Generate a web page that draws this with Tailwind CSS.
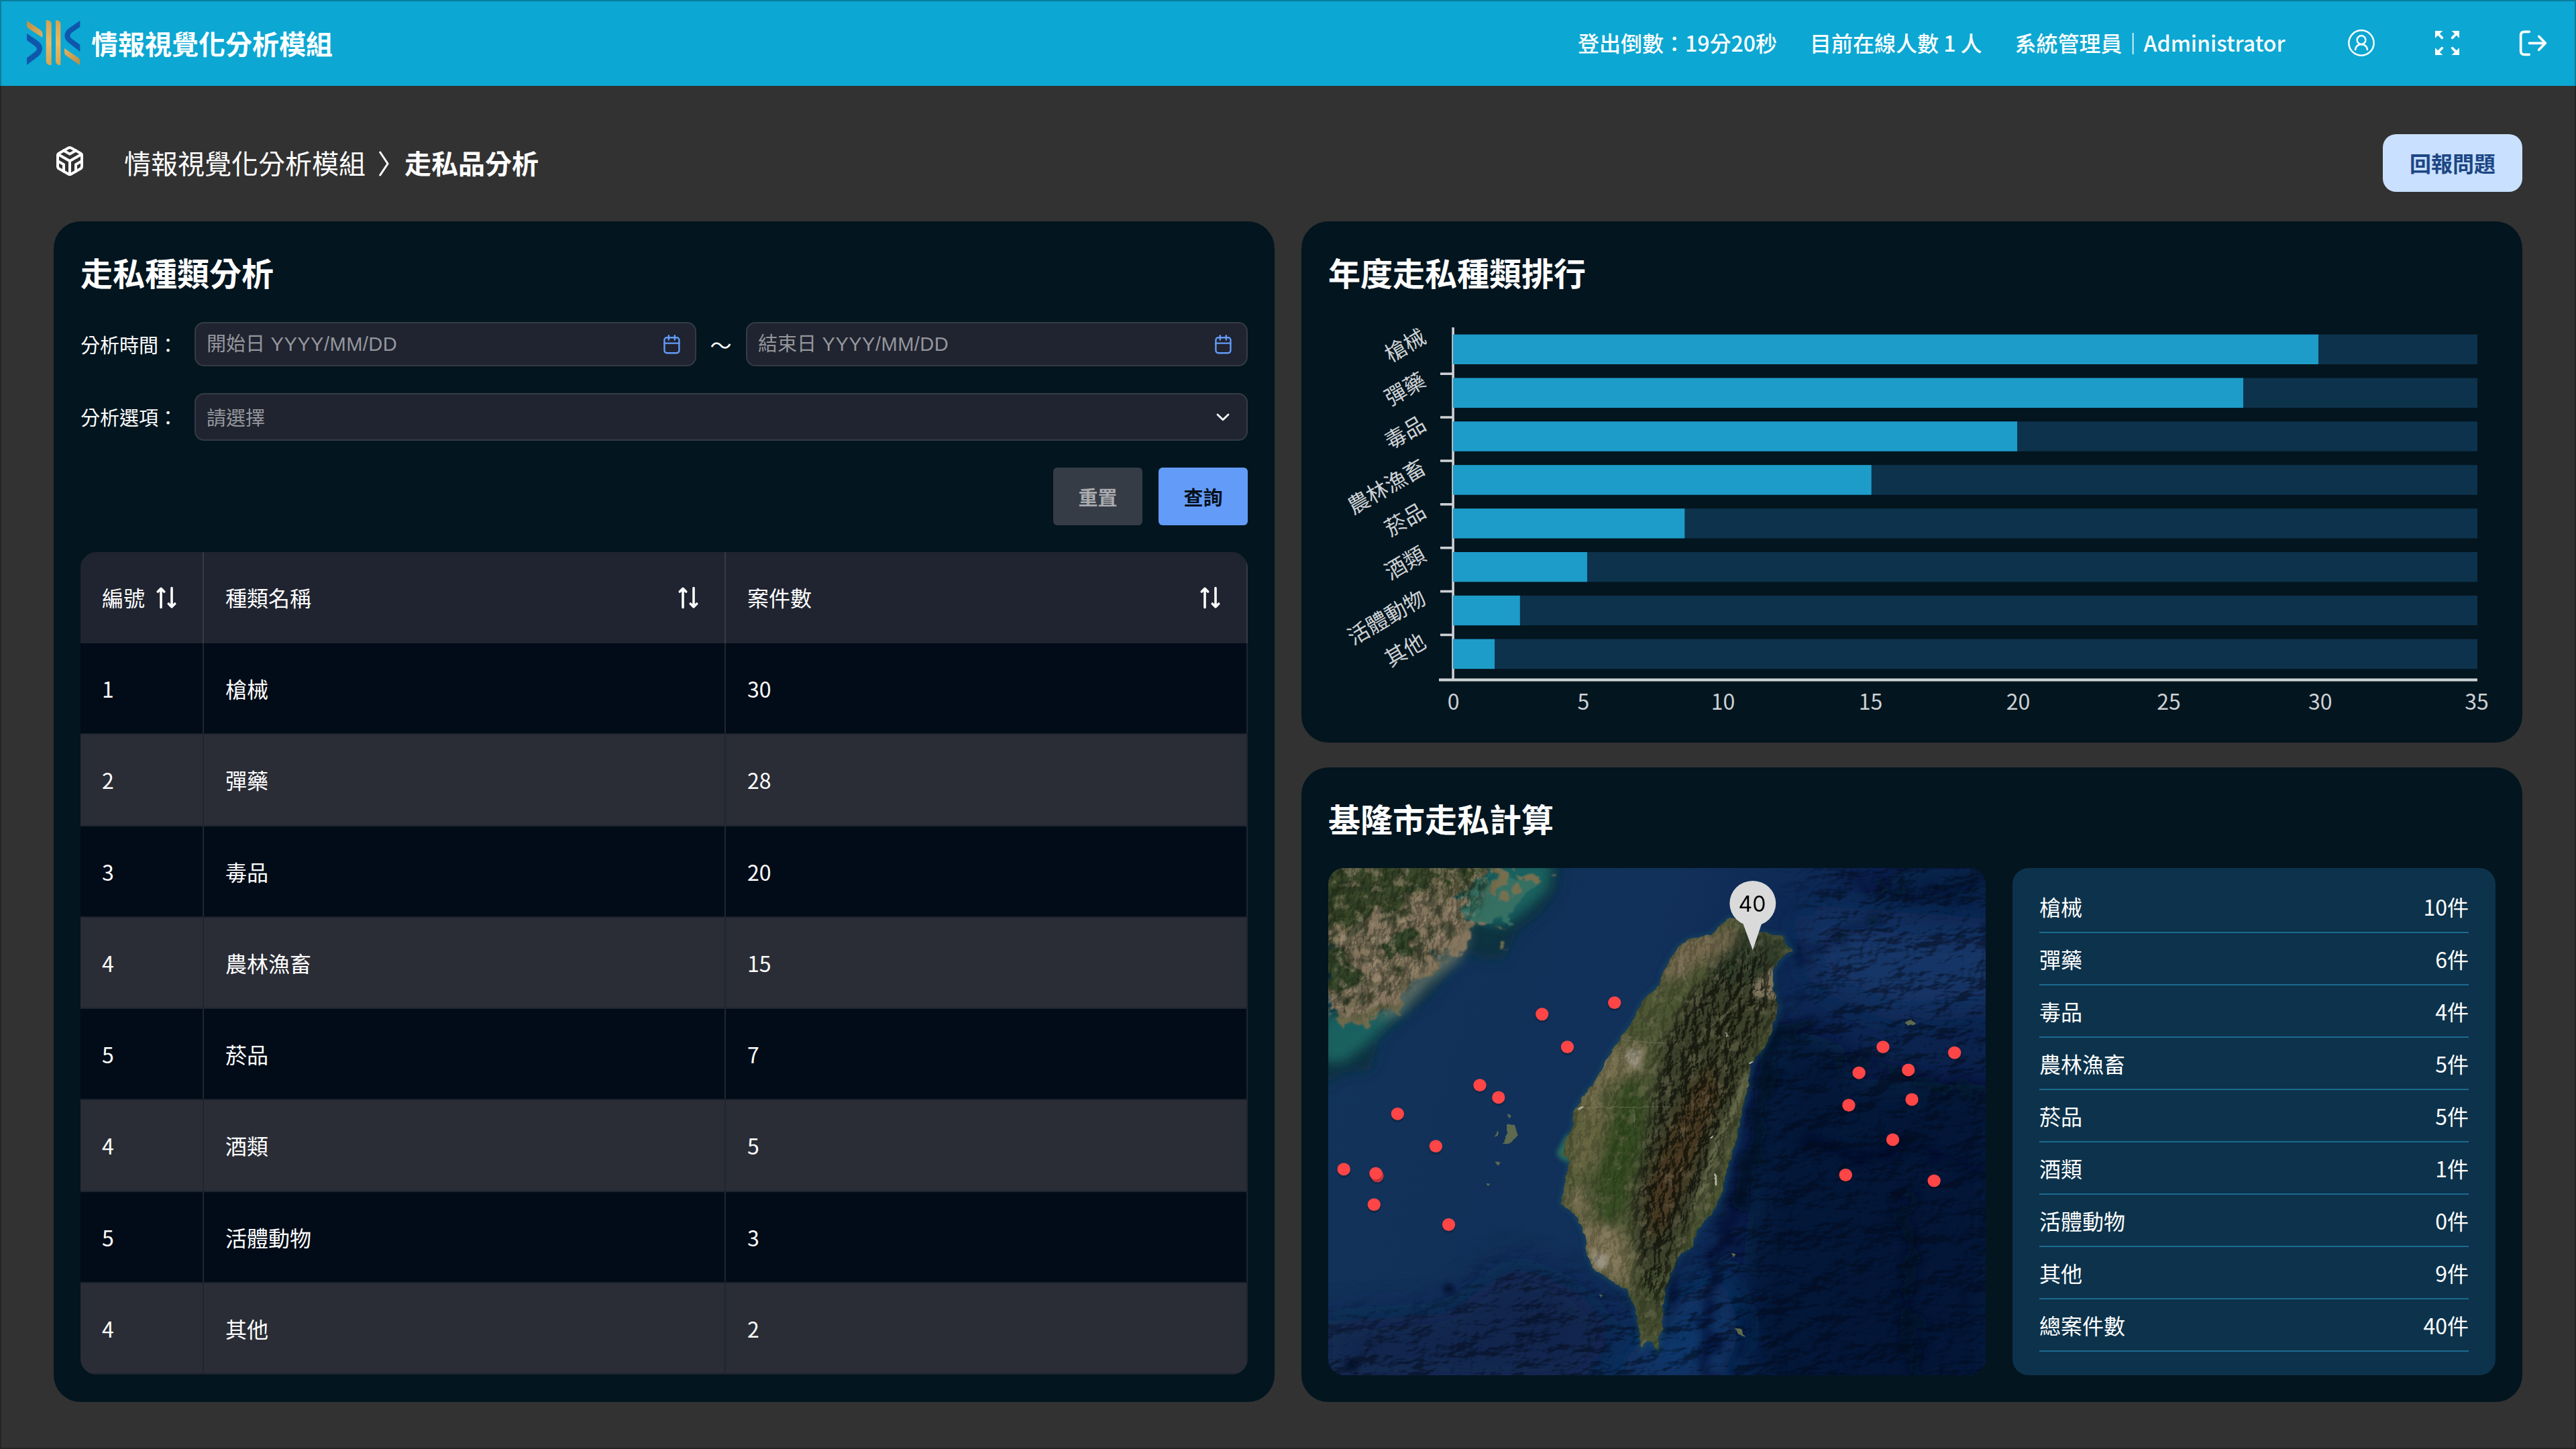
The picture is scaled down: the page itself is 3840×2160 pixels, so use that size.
<!DOCTYPE html>
<html lang="zh-Hant">
<head>
<meta charset="utf-8">
<title>走私品分析</title>
<script src="https://cdn.jsdelivr.net/npm/@tailwindcss/browser@4"></script>
</head>
<body class="bg-[#323232]">
<div class="relative flex h-[2160px] w-[3840px] flex-col overflow-hidden bg-[#323232] font-['Noto_Sans_CJK_TC',sans-serif] text-[32px] leading-none text-white">

  <header class="flex h-32 shrink-0 items-center bg-[#0ca8d3] pl-10 pr-[39px]">
    <svg class="h-[68px] w-20" viewBox="60 60 240 204">
      <defs>
        <linearGradient id="g1" x1="0" y1="0" x2="1" y2="1"><stop offset="0" stop-color="#b98f45"/><stop offset="1" stop-color="#dfae5c"/></linearGradient>
        <linearGradient id="g2" x1="0" y1="0" x2="0" y2="1"><stop offset="0" stop-color="#d3a352"/><stop offset=".5" stop-color="#eab963"/><stop offset="1" stop-color="#d6a654"/></linearGradient>
        <linearGradient id="g3" x1="0" y1="0" x2="1" y2="1"><stop offset="0" stop-color="#e4b35f"/><stop offset="1" stop-color="#b58c44"/></linearGradient>
      </defs>
      <path fill="url(#g1)" d="M60 62L118 102Q130 110 130 122V138L66 96Q60 91 60 84Z"/>
      <path fill="#0f56ad" d="M60 119L110 154C135 172 135 204 110 223L60 260V229L97 202C107 194 107 184 97 177L60 150Z"/>
      <path fill="url(#g2)" d="M146 61H154Q170 64 170 78V261H162Q146 258 146 244Z"/>
      <path fill="url(#g2)" d="M189 61H197Q211 64 211 78V261H205Q189 258 189 244Z"/>
      <path fill="#0f56ad" d="M298 62L248 97C223 116 223 144 248 162L298 201V170L261 143C251 136 251 124 261 116L298 90Z"/>
      <path fill="url(#g3)" d="M228 186L290 228Q298 234 298 242V262L236 219Q228 213 228 204Z"/>
    </svg>
    <h1 class="ml-4 text-[40px] font-bold">情報視覺化分析模組</h1>
    <div class="ml-auto flex items-center">
      <div class="flex w-[1056px] gap-[49px] whitespace-pre pb-0.5 font-medium"><span>登出倒數：19分20秒</span><span>目前在線人數 1 人</span><span>系統管理員｜Administrator</span></div>
      <svg class="ml-[92px] size-10" viewBox="120 72 120 120" fill="none" stroke="#fff" stroke-width="7.5" stroke-linecap="round"><circle cx="180" cy="132" r="56"/><circle cx="180" cy="119" r="19"/><path d="M153 162C155 148 165 139 180 139S205 148 207 162"/></svg>
      <svg class="ml-[90px] size-9" viewBox="510 78 108 108" fill="#fff" stroke="#fff" stroke-width="11" stroke-linecap="round"><path stroke="none" d="M510 78h34l-34 32zM618 78v32l-34-32zM510 186v-32l34 32zM618 186h-34l34-32z"/><path d="M522 90l19 19M606 90l-19 19M522 174l19-19M606 174l-19-19"/></svg>
      <svg class="ml-[89px] mr-1 h-[39px] w-[42px]" viewBox="885 74 126 117" fill="none" stroke="#fff" stroke-width="11" stroke-linecap="round" stroke-linejoin="round"><path d="M931 81H909Q893 81 893 97V167Q893 183 909 183H931M931 132H1002M974 102L1003 132L974 162"/></svg>
    </div>
  </header>

  <div class="flex h-[202px] shrink-0 items-center px-20">
    <svg class="mt-[22px] size-12" viewBox="0 0 24 24" fill="none" stroke="#fff" stroke-width="2" stroke-linecap="round" stroke-linejoin="round"><path d="M21 16V8a2 2 0 0 0-1-1.73l-7-4a2 2 0 0 0-2 0l-7 4A2 2 0 0 0 3 8v8a2 2 0 0 0 1 1.73l7 4a2 2 0 0 0 2 0l7-4A2 2 0 0 0 21 16z"/><path d="M7.5 4.21L12 6.81l4.5-2.6M7.5 19.79V14.6L3 12M21 12l-4.5 2.6v5.19M3.27 6.96L12 12.01l8.73-5.05M12 22.08V12"/></svg>
    <nav class="ml-[57px] mt-[26px] flex items-center text-[40px]"><span>情報視覺化分析模組</span>
      <svg class="ml-[19px] mr-[22px] mt-1 h-[38px] w-[17px]" viewBox="0 0 17 38" fill="none" stroke="#fff" stroke-width="3"><path d="M2 1L14 19L2 37"/></svg>
      <span class="font-bold">走私品分析</span></nav>
    <button class="ml-auto mt-7 h-[86px] w-52 rounded-[20px] bg-[#c9e1fe] pb-0.5 font-bold text-[#1d4685]">回報問題</button>
  </div>

  <main class="flex h-[1760px] gap-10 px-20">
    <section class="flex w-[1820px] flex-col rounded-[40px] bg-[#031620] px-10">
      <h2 class="mt-[51px] h-12 text-5xl font-bold">走私種類分析</h2>
      <div class="mt-[51px] flex h-[66px] items-center text-[29px]">
        <span class="w-[170px] pt-px">分析時間：</span>
        <div class="flex h-[66px] w-[748px] items-center justify-between rounded-[14px] border-2 border-[#353b45] bg-[#1f2430] pl-4 pr-[22px] text-[#94969c]">
          <span class="pb-0.5">開始日<span class="font-['Liberation_Sans',sans-serif] tracking-[0.5px]"> YYYY/MM/DD</span></span>
          <svg class="h-[29px] w-[25px]" viewBox="0 0 25 29" fill="none" stroke="#639bf8" stroke-width="2.4" stroke-linecap="round"><rect x="1.4" y="4.2" width="22" height="23" rx="3.6"/><path d="M1.4 12.6H23.4M7.8 1.2V7.6M16.8 1.2V7.6"/></svg>
        </div>
        <span class="w-[74px] pr-px text-center text-[32px]">～</span>
        <div class="flex h-[66px] w-[748px] items-center justify-between rounded-[14px] border-2 border-[#353b45] bg-[#1f2430] pl-4 pr-[22px] text-[#94969c]">
          <span class="pb-0.5">結束日<span class="font-['Liberation_Sans',sans-serif] tracking-[0.5px]"> YYYY/MM/DD</span></span>
          <svg class="h-[29px] w-[25px]" viewBox="0 0 25 29" fill="none" stroke="#639bf8" stroke-width="2.4" stroke-linecap="round"><rect x="1.4" y="4.2" width="22" height="23" rx="3.6"/><path d="M1.4 12.6H23.4M7.8 1.2V7.6M16.8 1.2V7.6"/></svg>
        </div>
      </div>
      <div class="mt-10 flex h-[71px] items-center text-[29px]">
        <span class="w-[170px]">分析選項：</span>
        <div class="flex h-[71px] w-[1570px] items-center justify-between rounded-[14px] border-2 border-[#353b45] bg-[#1f2430] pl-4 pr-[25px] text-[#94969c]">
          <span>請選擇</span>
          <svg class="h-3 w-5" viewBox="0 0 20 12" fill="none" stroke="#fff" stroke-width="2.8" stroke-linecap="round" stroke-linejoin="round"><path d="M2 2L10 9.8L18 2"/></svg>
        </div>
      </div>
      <div class="mt-10 flex justify-end gap-6 text-[29px] font-bold">
        <button class="h-[86px] w-[133px] rounded-md bg-[#363c45] text-[#a9abaf]">重置</button>
        <button class="h-[86px] w-[133px] rounded-md bg-[#639bf8] text-[#04101c]">查詢</button>
      </div>
      <div id="table" class="mt-10 h-[1226px] overflow-hidden rounded-[24px] bg-[#1f2430]"></div>
    </section>

    <div class="flex w-[1820px] flex-col gap-[37px]">
      <section class="h-[777px] rounded-[40px] bg-[#031620] px-10">
        <h2 class="h-[99px] pt-[51px] text-5xl font-bold">年度走私種類排行</h2>
        <svg id="chart" class="h-[660px] w-[1740px]" viewBox="1980 429 1740 660" font-size="32" fill="#cdd1d4"></svg>
      </section>

      <section class="h-[946px] rounded-[40px] bg-[#031620] px-10">
        <h2 class="h-[150px] pt-[51px] text-5xl font-bold">基隆市走私計算</h2>
        <div class="flex gap-10">
          <div class="relative h-[756px] w-[980px] overflow-hidden rounded-[24px]">
            <svg class="block size-full" viewBox="75 267 1479 1236" preserveAspectRatio="none">
              <defs>
                <linearGradient id="sea" x1="0" y1="0" x2="1" y2=".25"><stop offset="0" stop-color="#123359"/><stop offset=".5" stop-color="#11305a"/><stop offset=".72" stop-color="#0d2854"/><stop offset="1" stop-color="#0b234d"/></linearGradient>
                <filter id="b6" x="-20%" y="-20%" width="140%" height="140%"><feGaussianBlur stdDeviation="6"/></filter>
                <filter id="b14" x="-30%" y="-30%" width="160%" height="160%"><feGaussianBlur stdDeviation="14"/></filter>
                <filter id="b40" x="-50%" y="-50%" width="200%" height="200%"><feGaussianBlur stdDeviation="38"/></filter>
                <filter id="ridge" x="-30%" y="-30%" width="160%" height="160%"><feTurbulence type="fractalNoise" baseFrequency=".02" numOctaves="4" seed="5" result="n"/><feDisplacementMap in="SourceGraphic" in2="n" scale="80" xChannelSelector="R" yChannelSelector="G" result="d"/><feGaussianBlur in="d" stdDeviation="9"/></filter>
                <filter id="ragged" x="-10%" y="-10%" width="120%" height="120%"><feTurbulence type="fractalNoise" baseFrequency=".02" numOctaves="5" seed="9" result="n"/><feDisplacementMap in="SourceGraphic" in2="n" scale="110" xChannelSelector="R" yChannelSelector="G" result="d"/><feGaussianBlur in="d" stdDeviation="1.6"/></filter>
                <filter id="coast" x="-5%" y="-5%" width="110%" height="110%"><feTurbulence type="fractalNoise" baseFrequency=".06" numOctaves="2" seed="2" result="n"/><feDisplacementMap in="SourceGraphic" in2="n" scale="9" xChannelSelector="R" yChannelSelector="G"/></filter>
                <!-- relief layers: black whose opacity grows on the slopes turned away from the light -->
                <filter id="seabed" x="0" y="0" width="100%" height="100%" color-interpolation-filters="sRGB"><feTurbulence type="fractalNoise" baseFrequency=".011 .018" numOctaves="4" seed="21" result="n"/><feDiffuseLighting in="n" surfaceScale="22" diffuseConstant="1" lighting-color="#ffffff"><feDistantLight azimuth="225" elevation="42"/></feDiffuseLighting><feColorMatrix values="0 0 0 0 .01  0 0 0 0 .03  0 0 0 0 .08  -2 0 0 0 1.35"/></filter>
                <filter id="relief" x="0" y="0" width="100%" height="100%" color-interpolation-filters="sRGB"><feTurbulence type="fractalNoise" baseFrequency=".05 .032" numOctaves="4" seed="7" result="n"/><feDiffuseLighting in="n" surfaceScale="16" diffuseConstant="1" lighting-color="#ffffff"><feDistantLight azimuth="215" elevation="42"/></feDiffuseLighting><feColorMatrix values="0 0 0 0 .05  0 0 0 0 .06  0 0 0 0 .03  -1.7 0 0 0 1.3"/></filter>
                <filter id="grain" x="0" y="0" width="100%" height="100%" color-interpolation-filters="sRGB"><feTurbulence type="fractalNoise" baseFrequency=".03" numOctaves="5" seed="12"/><feColorMatrix values="0 0 0 0 .15  0 0 0 0 .2  0 0 0 0 .12  5 0 0 0 -2.2"/></filter>
                <filter id="light" x="0" y="0" width="100%" height="100%" color-interpolation-filters="sRGB"><feTurbulence type="fractalNoise" baseFrequency=".035" numOctaves="5" seed="31"/><feColorMatrix values="0 0 0 0 .64  0 0 0 0 .58  0 0 0 0 .48  6 0 0 0 -3.2"/></filter>
                <path id="isle" d="M978 388L992 388L1005 402L1020 408L1050 425L1098 432L1105 455L1122 468L1098 482L1075 515L1075 550L1087 600L1080 640L1062 690L1045 720L1025 745L1020 800L1005 860L995 920L985 960L970 1010L960 1060L940 1105L905 1150L893 1190L860 1215L848 1250L835 1290L827 1330L827 1390L818 1415L817 1443L805 1425L790 1420L780 1437L775 1390L765 1340L750 1300L715 1275L672 1245L658 1210L652 1160L630 1110L598 1085L603 1060L612 1010L618 980L600 965L610 935L624 895L628 860L648 825L680 780L695 745L720 700L760 640L782 590L822 550L830 515L860 460L885 440L935 430L960 405Z"/>
                <clipPath id="isleClip"><use href="#isle"/></clipPath>
                <mask id="landMask"><path filter="url(#b14)" fill="#fff" d="M40 230H460L430 330L400 390L370 430L340 480L280 530L240 570L215 610L150 630L90 620L40 640Z"/></mask>
                <mask id="seaMask"><g filter="url(#b40)"><path fill="#fff" d="M1130 200H1650V1600H0V1370L330 1340L480 1210L640 1280L760 1340L860 1300L900 1200L990 1080L1040 760L1120 640L1160 450Z"/></g></mask>
                <mask id="hillMask"><path filter="url(#b14)" fill="#fff" d="M960 500L1050 450L1080 600L1015 740L980 880L920 1050L860 1190L825 1330L780 1300L765 1080L800 880L830 700L880 590Z"/></mask>
              </defs>
              <rect x="75" y="267" width="1479" height="1236" fill="url(#sea)"/>
              <g filter="url(#b40)">
                <path fill="#041331" d="M1050 780L1120 650L1230 700L1260 780L1600 800V1600H1040L1000 1330Z" opacity=".7"/>
                <path fill="#15386a" d="M1140 380L1600 420V600L1350 620L1180 540Z" opacity=".9"/>
                <path fill="#0b1f45" d="M60 1370L340 1350L500 1230L640 1300L720 1400L640 1520H60Z" opacity=".6"/>
                <path fill="#12376b" d="M850 1330L960 1250L1000 1400L960 1520H700Z" opacity=".9"/>
                <path fill="#0b1a3a" d="M1200 270H1560V350L1430 380L1340 320Z" opacity=".5"/>
              </g>
              <g filter="url(#ridge)" fill="none" stroke="#030c22" stroke-linecap="round">
                <path stroke-width="40" d="M1150 640L1085 680L1050 800L1035 930L1000 1080" opacity=".75"/>
                <path stroke-width="28" d="M1370 1060L1385 1200L1370 1310L1400 1500" opacity=".7"/>
                <path stroke-width="32" d="M1000 1050L960 1160L925 1280L930 1500" opacity=".5"/>
                <path stroke-width="22" d="M1210 740L1300 730L1420 800L1554 800" opacity=".55"/>
                <path stroke-width="18" d="M1150 940L1260 970L1380 940L1554 1000" opacity=".5"/>
                <path stroke-width="14" d="M1250 290L1400 340L1540 300M1130 500L1210 440L1300 400" opacity=".6"/>
                <path stroke-width="16" d="M1000 1350L1010 1420L990 1500M850 1260L840 1400" opacity=".45"/>
              </g>
              <g mask="url(#seaMask)"><rect x="75" y="267" width="1479" height="1236" filter="url(#seabed)" opacity=".5"/></g>
              <g filter="url(#b6)" fill="#050f28"><ellipse cx="346" cy="1292" rx="12" ry="9"/><ellipse cx="126" cy="1478" rx="14" ry="9"/></g>

              <path filter="url(#b14)" fill="#0a3340" d="M60 800L60 250H600L585 330L550 380L500 420L470 490L420 490L390 470L300 580L190 680L170 760L110 765Z"/>
              <path filter="url(#b14)" fill="#1f6a66" opacity=".85" d="M380 250H580L570 320L520 370L470 410L420 400L350 380ZM60 620L190 600L250 600L170 690L110 740L60 740Z"/>
              <path filter="url(#b14)" fill="#6f7b73" opacity=".8" d="M400 410L370 490L300 550L240 620L180 640L280 500Z"/>
              <g filter="url(#ragged)">
                <path fill="#347063" d="M400 290H550L530 340L480 390L420 400L370 370Z"/>
                <path fill="#6f6a4e" d="M75 240H425L400 310L350 350L330 380L410 390L390 430L340 490L270 550L235 610L170 650L75 640Z"/>
                <path fill="#77704f" d="M430 250H490L485 330L470 350L450 320ZM515 260L560 280L545 320L515 310ZM445 410L475 420L460 435Z"/>
                <path fill="#85765f" d="M75 430L200 380L330 330L410 390L370 460L280 530L230 600L75 620Z"/>
                <path fill="#3a4a2c" d="M40 230H420L380 290L270 330L190 380L75 410L40 420Z"/>
                <path fill="#35472c" d="M50 480L130 470L150 560L120 600L50 580ZM200 450L250 430L270 480L220 500Z"/>
              </g>
              <g mask="url(#landMask)">
                <rect x="75" y="267" width="420" height="450" filter="url(#grain)" opacity=".55"/>
                <rect x="75" y="267" width="420" height="450" filter="url(#light)" opacity=".5"/>
                <rect x="75" y="267" width="420" height="450" filter="url(#relief)" opacity=".3"/>
              </g>

              <use href="#isle" filter="url(#b6)" fill="none" stroke="#1e5a64" stroke-width="10" opacity=".45"/>
              <path filter="url(#b6)" fill="#2a6a5c" d="M612 915L588 962L600 978L626 985L632 930Z"/>
              <g filter="url(#coast)">
                <use href="#isle" fill="#4d5634"/>
                <g clip-path="url(#isleClip)">
                  <g filter="url(#b14)">
                    <path fill="#3b4029" d="M960 500L1060 470L1090 600L1020 740L990 880L930 1050L860 1180L820 1280L770 1220L760 1080L800 880L830 700L880 590Z"/>
                    <path fill="#463724" d="M930 740L960 820L900 980L850 1120L800 1180L790 1050L860 860Z"/>
                    <path fill="#333c2a" d="M1000 410L1120 450L1080 520L960 560L930 520Z"/>
                    <path fill="#75694f" d="M860 440L950 425L980 400L990 450L930 490L850 540L820 540Z"/>
                    <path fill="#77704f" d="M710 700L790 690L780 760L700 800L650 860L630 850Z"/>
                    <path fill="#65653f" d="M640 850L740 830L720 930L660 1010L620 1040L620 930Z"/>
                    <path fill="#344b23" d="M745 760L790 830L780 960L740 1090L690 1160L680 1050L700 900Z"/>
                    <path fill="#7f7556" d="M600 1060L650 1050L660 1130L740 1150L755 1250L740 1290L660 1240L640 1120Z"/>
                    <path fill="#434c2d" d="M760 1250L830 1260V1400L780 1400Z"/>
                  </g>
                  <path filter="url(#b6)" fill="#7b735b" d="M1080 510L1050 530L1020 580L1085 590Z"/>
                  <path filter="url(#b6)" fill="#a39b8c" d="M665 1200L705 1210L700 1250L670 1235ZM745 710L780 705L775 760L745 740Z" opacity=".8"/>
                  <rect x="560" y="370" width="580" height="1090" filter="url(#light)" opacity=".22"/>
                  <rect x="560" y="370" width="580" height="1090" filter="url(#relief)" opacity=".2"/>
                  <path filter="url(#b6)" fill="none" stroke="#6d7250" stroke-width="13" d="M1020 770L985 860L950 940L920 1040L895 1110"/>
                  <g fill="none" stroke="#aaa78d" stroke-width="2" opacity=".3"><path d="M735 685L780 690L830 694M640 850L740 850L850 848M870 525L885 555M760 850L765 900M1010 585L950 640L900 700"/></g>
                  <g stroke="#d8d6cc" stroke-width="4" opacity=".8"><path d="M947 1012V1042M936 925L942 920M1022 742L1030 738M638 857L648 848M968 668L974 676"/></g>
                </g>
              </g>
              <g mask="url(#hillMask)"><rect x="560" y="370" width="580" height="1090" filter="url(#relief)" opacity=".7"/></g>
              <g filter="url(#coast)" fill="#5d6a4d">
                <path d="M475 890L495 895L502 920L485 935L468 938L475 915ZM455 905L458 920L450 922ZM478 865L486 870L483 878ZM450 982L462 984L458 992ZM430 1035L440 1037L434 1042ZM1372 644L1388 638L1396 646L1378 651ZM980 1205L992 1208L986 1216ZM990 1388L1005 1390L1012 1410L1000 1405ZM683 1304L690 1306L685 1312Z"/>
              </g>
              <g id="dots"></g>
              <g fill="#dadada"><ellipse cx="1030" cy="353" rx="52" ry="55"/><path d="M1006 396L1030 467L1052 396Z"/></g>
            </svg>
            <span class="absolute left-[592px] top-[36px] w-20 text-center font-['Inter',sans-serif] text-[32px] leading-9 text-black">40</span>
          </div>
          <div id="list" class="h-[756px] w-[720px] rounded-[24px] bg-[#0d334c] px-10 pt-[19px]"></div>
        </div>
      </section>
    </div>
  </main>

  <div class="pointer-events-none absolute inset-0 border-2 border-black/25"></div>
</div>
<script>
const sort = '<svg class="size-12" viewBox="0 0 48 48" fill="none" stroke="#fff" stroke-width="3.6" stroke-linecap="round" stroke-linejoin="round"><path d="M16 39.5V11.5M11.3 16L16 11.3L20.7 16M32 10.5V38.5M27.3 34L32 38.7L36.7 34"/></svg>';
const names = ['槍械','彈藥','毒品','農林漁畜','菸品','酒類','活體動物','其他'];
const ids = ['1','2','3','4','5','4','5','4'];
const totals = ['30','28','20','15','7','5','3','2'];
const head = ['編號','種類名稱','案件數'].map((t, i) =>
  `<div class="${i ? 'flex w-[778px] items-center justify-between border-r-2 border-[#353b45] pb-0.5 pl-8 pr-[30px]' : 'flex w-[184px] items-center justify-between border-r-2 border-[#353b45] pb-0.5 pl-8 pr-[30px]'}"><span>${t}</span>${sort}</div>`).join('');
document.getElementById('table').innerHTML =
  `<div class="flex h-[136px] bg-[#1f2430]">${head}</div>` +
  names.map((n, j) => `<div class="${j % 2 ? 'flex h-[136.25px] border-b-2 border-[#1f2530] bg-[#2a2d36]' : 'flex h-[136.25px] border-b-2 border-[#1b222d] bg-[#020c18]'}">` +
    [ids[j], n, totals[j]].map((c, i) => `<div class="${i ? 'flex w-[778px] items-center border-r-2 border-[#1f2631] px-8' : 'flex w-[184px] items-center border-r-2 border-[#1f2631] px-8'}">${c}</div>`).join('') + '</div>').join('');

const ends = [3456, 3344, 3007, 2789.7, 2511.3, 2366, 2265.8, 2228];
let s = '';
names.forEach((n, i) => {
  const y = 498.6 + i * 64.87;
  s += `<rect x="2166" y="${y}" width="1527" height="44.4" fill="#0d334c"/>`;
  s += `<text text-anchor="end" transform="translate(2128 ${509 + i * 64.87}) rotate(-30)">${n}</text>`;
  if (i < 7) s += `<rect x="2147" y="${555.4 + i * 64.87}" width="18" height="3.6"/>`;
});
s += '<rect x="2164.3" y="488" width="3.6" height="524"/>';
names.forEach((n, i) => { s += `<rect x="2166" y="${498.6 + i * 64.87}" width="${ends[i] - 2166}" height="44.4" fill="#1e9cc9"/>`; });
s += '<rect x="2145" y="1011.4" width="1548" height="4.2"/>';
[[0,2166.6],[5,2360.5],[10,2568.4],[15,2788.4],[20,3008.5],[25,3233],[30,3458.8],[35,3692]].forEach(([t, x]) => { s += `<text text-anchor="middle" x="${x}" y="1057.5">${t}</text>`; });
document.getElementById('chart').innerHTML = s;

document.getElementById('dots').innerHTML = [[556,623],[719,595],[613,703],[416,796],[458,826],[231,866],[317,945],[110,1001],[185,1017],[182,1011],[178,1087],[346,1136],[1323,703],[1484,717],[1269,766],[1380,759],[1246,845],[1388,831],[1345,929],[1239,1015],[1438,1029]]
  .map(([x, y]) => `<ellipse cx="${x}" cy="${y + 4}" rx="16" ry="17" fill="#000" opacity=".16"/><ellipse cx="${x}" cy="${y}" rx="14.6" ry="15.4" fill="${x === 185 ? '#dc3c42' : '#ff4546'}"/>`).join('');

const counts = ['10','6','4','5','5','1','0','9','40'];
document.getElementById('list').innerHTML = [...names, '總案件數'].map((n, i) =>
  `<div class="flex h-[78px] items-center justify-between border-b-2 border-[#1d6a90]"><span>${n}</span><span>${counts[i]}件</span></div>`).join('');
</script>
</body>
</html>
